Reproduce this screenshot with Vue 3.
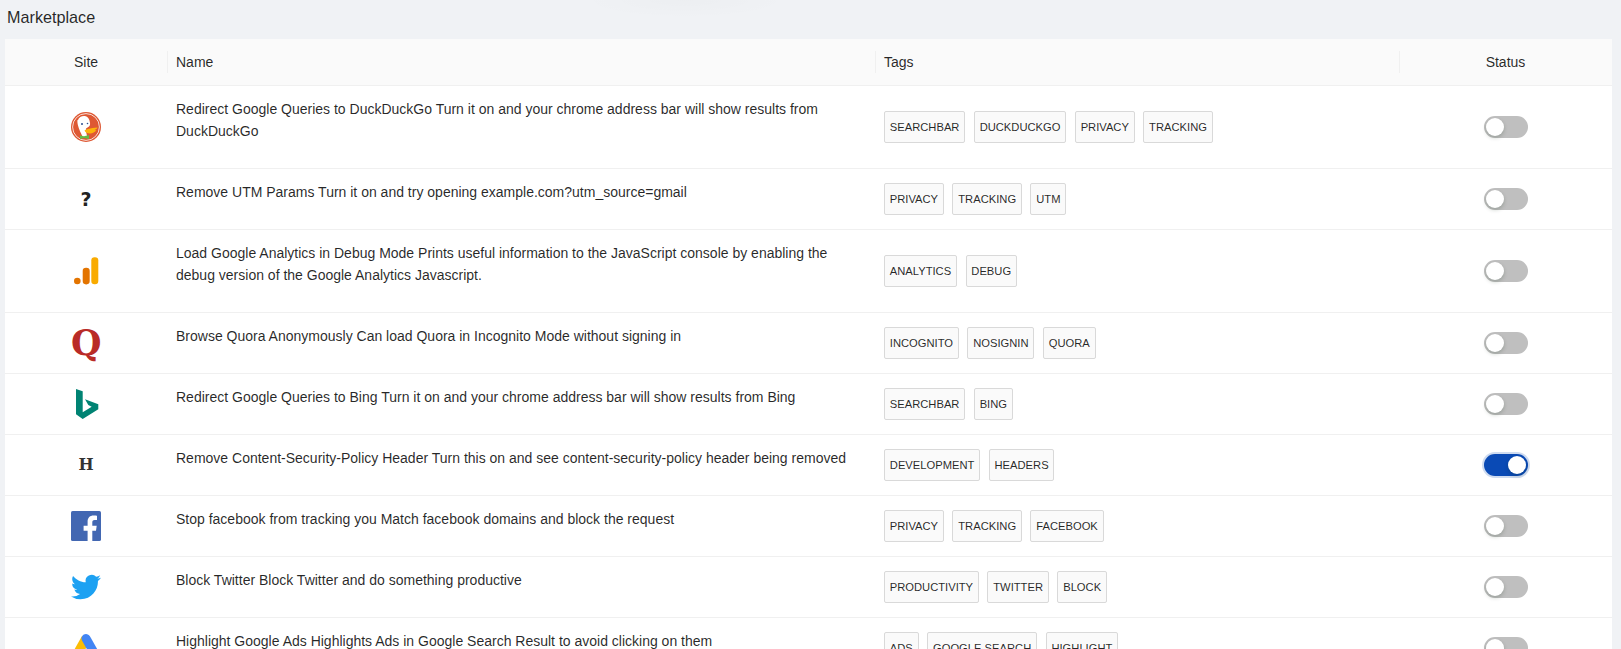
<template>
  <div class="page">
    <div class="top-shade"></div>
    <div class="title">Marketplace</div>
    <div class="table">
      <div class="row head">
        <div class="cell site">Site</div>
        <div class="cell name"><i class="sep"></i>Name</div>
        <div class="cell tags"><i class="sep"></i>Tags</div>
        <div class="cell status"><i class="sep"></i>Status</div>
      </div>
      <div class="row" v-for="item in items" :key="item.title">
        <div class="cell site">
          <svg v-if="item.icon === 'duck'" class="icon" viewBox="0 0 30 30">
            <circle cx="15" cy="15" r="15" fill="#de5833" />
            <circle cx="15" cy="15" r="13.4" fill="none" stroke="#fff" stroke-width="0.8" />
            <path d="M7 8c1-3 4-4.500 7-4 3 .5 4.500 3 5 7 .2 1.500 0 2.500-1 3.500l-3 2c-.5 2 .5 5 1.500 9-1.500.5-3 .5-4.500 0-2-4-4-8-5-12-.5-2-.8-4-.5-5.500z" fill="#fff" />
            <circle cx="11" cy="12" r="1" fill="#2d4f8e" />
            <circle cx="16.500" cy="11.500" r="0.800" fill="#2d4f8e" />
            <path d="M13.500 18.500c2-1.500 5-2 8-2.500l5-.5c-.3 1.200-1.500 2-3 2.500 .8 .2 1.500 .3 2 .3-1.500 2-4 3.200-6.500 3.200-2.500 0-5-1-5.500-3z" fill="#fdb30b" />
            <path d="M9 23.500l4 .8 5-1.300v4l-5-1-4 1z" fill="#65bc46" />
          </svg>
          <span v-else-if="item.icon === 'question'" class="glyph question">?</span>
          <svg v-else-if="item.icon === 'analytics'" class="icon" viewBox="0 0 30 30">
            <circle cx="6.300" cy="25" r="3.300" fill="#e37400" />
            <rect x="11.700" y="11.700" width="7" height="16.700" rx="3.300" fill="#e37400" />
            <rect x="20.300" y="1.300" width="7" height="27" rx="3.300" fill="#f9ab00" />
          </svg>
          <span v-else-if="item.icon === 'quora'" class="glyph quora">Q</span>
          <svg v-else-if="item.icon === 'bing'" class="icon" viewBox="0 0 30 30">
            <path d="M5 0L11.700 2.300V23.300L20.700 17.700 17.300 16 14 10.300 27.300 15.300V20.300L11.700 30 5 25.300z" fill="#008373" />
          </svg>
          <span v-else-if="item.icon === 'header'" class="glyph header">H</span>
          <svg v-else-if="item.icon === 'facebook'" class="icon" viewBox="0 0 30 30">
            <rect width="30" height="30" rx="1.600" fill="#4267b2" />
            <path d="M21.300 30V19.800h3.700l.7-5h-4.400V11.500c0-1.400.4-2.400 2.400-2.400h2.300V4.700c-.4-.1-1.800-.2-3.500-.2-3.500 0-5.900 2.100-5.900 6v4.300h-4v5h4V30z" fill="#fff" />
          </svg>
          <svg v-else-if="item.icon === 'twitter'" class="icon" viewBox="0 0 24 24">
            <path d="M23.950 4.570a10 10 0 0 1-2.820.77 4.960 4.960 0 0 0 2.160-2.720c-.95.550-2 .95-3.130 1.180a4.920 4.920 0 0 0-8.380 4.480C7.690 8.100 4.070 6.130 1.640 3.160a4.820 4.820 0 0 0-.67 2.480c0 1.710.87 3.210 2.190 4.100a4.900 4.900 0 0 1-2.230-.62v.06a4.920 4.920 0 0 0 3.950 4.830 5 5 0 0 1-2.210.08 4.940 4.940 0 0 0 4.600 3.420A9.870 9.870 0 0 1 .96 19.620 9.900 9.900 0 0 1 0 19.540a14 14 0 0 0 7.560 2.210c9.050 0 14-7.500 14-13.980 0-.21 0-.42-.02-.63a9.940 9.940 0 0 0 2.460-2.550z" fill="#1da1f2" />
          </svg>
          <svg v-else class="icon" viewBox="0 0 30 30">
            <path d="M11 3L2 19l8 6 8-16z" fill="#fbbc04" />
            <path d="M15 5.500L25.800 24.500" stroke="#4285f4" stroke-width="9" stroke-linecap="round" fill="none" />
            <circle cx="6" cy="24" r="4.800" fill="#34a853" />
          </svg>
        </div>
        <div class="cell name"><p>{{ item.title }}</p></div>
        <div class="cell tags">
          <span class="tag" v-for="tag in item.tags" :key="tag">{{ tag }}</span>
        </div>
        <div class="cell status">
          <span class="switch" :class="{ on: item.on }"><b></b></span>
        </div>
      </div>
    </div>
  </div>
</template>

<script setup>
const items = [
  { icon: 'duck', title: 'Redirect Google Queries to DuckDuckGo Turn it on and your chrome address bar will show results from DuckDuckGo', tags: ['SEARCHBAR', 'DUCKDUCKGO', 'PRIVACY', 'TRACKING'] },
  { icon: 'question', title: 'Remove UTM Params Turn it on and try opening example.com?utm_source=gmail', tags: ['PRIVACY', 'TRACKING', 'UTM'] },
  { icon: 'analytics', title: 'Load Google Analytics in Debug Mode Prints useful information to the JavaScript console by enabling the debug version of the Google Analytics Javascript.', tags: ['ANALYTICS', 'DEBUG'] },
  { icon: 'quora', title: 'Browse Quora Anonymously Can load Quora in Incognito Mode without signing in', tags: ['INCOGNITO', 'NOSIGNIN', 'QUORA'] },
  { icon: 'bing', title: 'Redirect Google Queries to Bing Turn it on and your chrome address bar will show results from Bing', tags: ['SEARCHBAR', 'BING'] },
  { icon: 'header', title: 'Remove Content-Security-Policy Header Turn this on and see content-security-policy header being removed', tags: ['DEVELOPMENT', 'HEADERS'], on: true },
  { icon: 'facebook', title: 'Stop facebook from tracking you Match facebook domains and block the request', tags: ['PRIVACY', 'TRACKING', 'FACEBOOK'] },
  { icon: 'twitter', title: 'Block Twitter Block Twitter and do something productive', tags: ['PRODUCTIVITY', 'TWITTER', 'BLOCK'] },
  { icon: 'ads', title: 'Highlight Google Ads Highlights Ads in Google Search Result to avoid clicking on them', tags: ['ADS', 'GOOGLE SEARCH', 'HIGHLIGHT'] },
]
</script>

<style>
html, body { margin: 0; height: 100%; overflow: hidden; background: #f0f2f5; }
</style>

<style scoped>
.page {
  position: relative;
  height: 649px;
  overflow: hidden;
  padding: 0 9px 0 5px;
  font-family: "Liberation Sans", Arial, sans-serif;
  font-size: 14px;
  color: rgba(0, 0, 0, 0.85);
}
.top-shade {
  position: absolute;
  left: 580px;
  top: -18px;
  width: 210px;
  height: 36px;
  background: radial-gradient(closest-side, rgba(0, 0, 0, 0.016), rgba(0, 0, 0, 0));
}
.title {
  height: 39px;
  padding: 6px 0 0 2px;
  box-sizing: border-box;
  font-size: 16.2px;
  line-height: 22px;
}
.table { background: #fff; }
.row {
  display: grid;
  grid-template-columns: 162px 708px 524px 213px;
  align-items: center;
  border-bottom: 1px solid #f0f0f0;
}
.head {
  height: 47px;
  box-sizing: border-box;
  background: #fafafa;
}
.cell { position: relative; padding: 12px 8px; }
.head .cell { padding: 0 8px; line-height: 22px; }
.name, .tags, .head .name, .head .tags { padding-left: 9px; }
.site, .status { text-align: center; }
.site { display: flex; justify-content: center; align-items: center; }
.sep {
  position: absolute;
  left: 0;
  top: 0;
  height: 22px;
  width: 1px;
  background: #f0f0f0;
}
p { margin: 0 0 14px; line-height: 22px; }
.icon { width: 30px; height: 30px; display: block; }
.glyph { display: block; width: 30px; height: 30px; text-align: center; line-height: 30px; }
.question { font-family: "DejaVu Sans", sans-serif; font-weight: 700; font-size: 19px; color: #222; }
.quora { font-family: "DejaVu Serif", serif; font-weight: 700; font-size: 35px; color: #b92b27; }
.header { font-family: "DejaVu Serif", serif; font-weight: 700; font-size: 16px; color: #333; }
.tags { display: flex; gap: 8.6px; }
.tag {
  height: 32px;
  box-sizing: border-box;
  padding: 0 4.8px;
  border: 1px solid #d9d9d9;
  border-radius: 2px;
  background: #fafafa;
  font-size: 11.2px;
  line-height: 30px;
}
.switch {
  display: inline-block;
  position: relative;
  width: 44px;
  height: 22px;
  border-radius: 11px;
  background: #bfbfbf;
  vertical-align: middle;
}
.switch b {
  position: absolute;
  left: 2px;
  top: 2px;
  width: 18px;
  height: 18px;
  border-radius: 50%;
  background: #fff;
  box-shadow: 0 2px 4px rgba(0, 35, 11, 0.2);
}
.switch.on { background: #0a4ab5; box-shadow: 0 0 0 2px rgba(10, 74, 181, 0.2); }
.switch.on b { left: 24px; }
</style>
